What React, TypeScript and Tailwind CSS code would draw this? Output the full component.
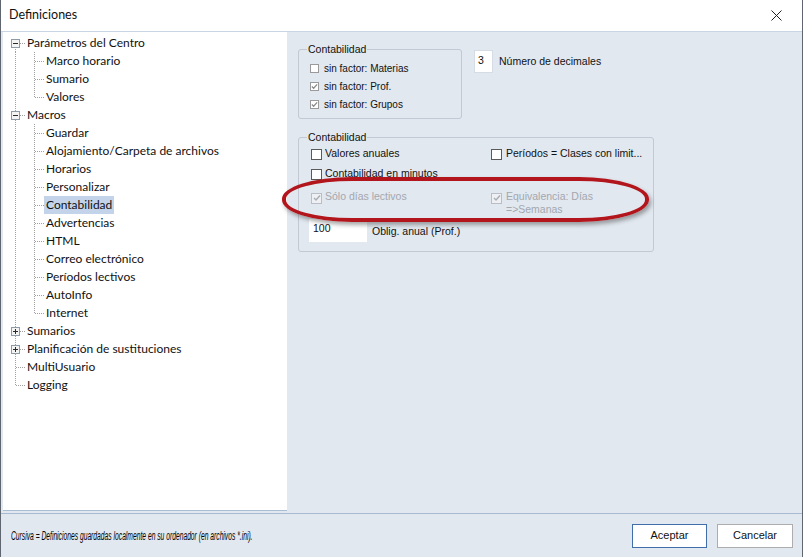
import React from "react";

type Section = {
  label: string;
  expander?: "plus" | "minus";
  children?: string[];
};

const sections: Section[] = [
  {
    label: "Parámetros del Centro",
    expander: "minus",
    children: ["Marco horario", "Sumario", "Valores"],
  },
  {
    label: "Macros",
    expander: "minus",
    children: [
      "Guardar",
      "Alojamiento/Carpeta de archivos",
      "Horarios",
      "Personalizar",
      "Contabilidad",
      "Advertencias",
      "HTML",
      "Correo electrónico",
      "Períodos lectivos",
      "AutoInfo",
      "Internet",
    ],
  },
  { label: "Sumarios", expander: "plus" },
  { label: "Planificación de sustituciones", expander: "plus" },
  { label: "MultiUsuario" },
  { label: "Logging" },
];

type Row = {
  label: string;
  level: 0 | 1;
  first?: boolean;
  last?: boolean;
  lastChild?: boolean;
  expander?: "plus" | "minus";
};

const rows: Row[] = [];
sections.forEach((s, i) => {
  rows.push({
    label: s.label,
    level: 0,
    first: i === 0,
    last: i === sections.length - 1,
    expander: s.expander,
  });
  (s.children || []).forEach((c, j, arr) => {
    rows.push({ label: c, level: 1, lastChild: j === arr.length - 1 });
  });
});

const dot = { stroke: "#a0a0a0", strokeDasharray: "1 1" };

const Guides = ({ row }: { row: Row }) => {
  const w = row.level ? 41 : 22;
  return (
    <svg width={w} height={18} className="shrink-0">
      {row.level === 0 ? (
        <>
          <line x1={12.5} x2={12.5} y1={row.first ? 9 : 0} y2={row.last ? 10 : 18} {...dot} />
          <line x1={13} x2={22} y1={9.5} y2={9.5} {...dot} />
        </>
      ) : (
        <>
          <line x1={12.5} x2={12.5} y1={0} y2={18} {...dot} />
          <line x1={31.5} x2={31.5} y1={0} y2={row.lastChild ? 10 : 18} {...dot} />
          <line x1={32} x2={41} y1={9.5} y2={9.5} {...dot} />
        </>
      )}
      {row.expander && (
        <g>
          <rect x={8.5} y={5.5} width={8} height={8} fill="#f4f4f4" stroke="#8f9aa8" />
          <line x1={10} x2={15} y1={9.5} y2={9.5} stroke="#2b2b2b" />
          {row.expander === "plus" && (
            <line x1={12.5} x2={12.5} y1={7} y2={12} stroke="#2b2b2b" />
          )}
        </g>
      )}
    </svg>
  );
};

const Check = ({
  checked,
  disabled,
  small,
}: {
  checked?: boolean;
  disabled?: boolean;
  small?: boolean;
}) => (
  <span
    className={
      "inline-flex shrink-0 items-center justify-center border " +
      (small ? "h-[9px] w-[9px] " : "h-[11px] w-[11px] ") +
      (disabled
        ? "border-[#b9bec6] bg-[#eef0f3]"
        : small
        ? "border-[#9a9a9a] bg-white"
        : "border-[#5a5a5a] bg-white")
    }
  >
    {checked && (
      <svg width={small ? 7 : 8} height={small ? 7 : 8} viewBox="0 0 8 8">
        <path
          d="M1 4 L3 6 L7 1.5"
          fill="none"
          stroke={disabled ? "#a9adb4" : "#8a8a8a"}
          strokeWidth={1.4}
        />
      </svg>
    )}
  </span>
);

export default function App() {
  return (
    <div className="h-[557px] w-[805px] bg-white">
      <div className="flex h-[557px] w-[803px] flex-col border-x border-[#5f6670] bg-[#e2e8f0] font-['Liberation_Sans',sans-serif] text-[#111]">
        {/* title bar */}
        <div className="flex h-[31px] shrink-0 items-center justify-between bg-white pl-[8px] pr-[20px] font-['Lato',sans-serif] text-[12.5px]">
          <span>Definiciones</span>
          <svg width="11" height="11" viewBox="0 0 11 11">
            <path d="M0.5 0.5 L10.5 10.5 M10.5 0.5 L0.5 10.5" stroke="#222" strokeWidth="1" />
          </svg>
        </div>

        <div className="flex min-h-0 flex-1 border-t border-[#c9d5e3]">
          {/* tree */}
          <div className="ml-[2px] mb-[2px] w-[284px] shrink-0 border-b border-[#a9bdd4] bg-white pt-[2px] font-['Lato',sans-serif] text-[12px]">
            {rows.map((r) => (
              <div key={r.label} className="flex h-[18px] items-center">
                <Guides row={r} />
                <span
                  className={
                    "h-[18px] px-[2px] leading-[18px] whitespace-nowrap " +
                    (r.label === "Contabilidad" ? "bg-[#c3d4ea]" : "")
                  }
                >
                  {r.label}
                </span>
              </div>
            ))}
          </div>

          {/* right panel */}
          <div className="relative flex-1 pl-[11px] pt-[11px] text-[10.5px]">
            <div className="flex items-start gap-[12px]">
              <fieldset className="w-[164px] rounded-[3px] border border-[#c3c9d2] px-0 pb-[4px]">
                <legend className="ml-[8px] px-[1px] leading-[13px]">Contabilidad</legend>
                <div className="mt-[3px] flex flex-col pl-[11px] text-[10px]">
                  <div className="flex h-[18px] items-center gap-[5px]">
                    <Check small />
                    <span>sin factor: Materias</span>
                  </div>
                  <div className="flex h-[18px] items-center gap-[5px]">
                    <Check small checked />
                    <span>sin factor: Prof.</span>
                  </div>
                  <div className="flex h-[19px] items-center gap-[5px]">
                    <Check small checked />
                    <span>sin factor: Grupos</span>
                  </div>
                </div>
              </fieldset>
              <div className="mt-[7px] flex items-center gap-[6px]">
                <div className="h-[23px] w-[19px] border border-[#d6dce5] bg-white pl-[3px] pt-[3px] leading-[13px]">
                  3
                </div>
                <span>Número de decimales</span>
              </div>
            </div>

            <fieldset className="mt-[12px] w-[356px] rounded-[3px] border border-[#c3c9d2] px-0 pb-[9px]">
              <legend className="ml-[8px] px-[1px] leading-[13px]">Contabilidad</legend>
              <div className="grid grid-cols-[180px_1fr] pl-[12px]">
                <div className="flex h-[20px] items-center gap-[3px]">
                  <Check />
                  <span>Valores anuales</span>
                </div>
                <div className="flex h-[20px] items-center gap-[4px]">
                  <Check />
                  <span>Períodos = Clases con limit...</span>
                </div>
                <div className="flex h-[20px] items-center gap-[3px]">
                  <Check />
                  <span>Contabilidad en minutos</span>
                </div>
                <div />
                <div className="mt-[6px] flex items-start gap-[3px] text-[#a3a7ae]">
                  <span className="mt-[1px]">
                    <Check checked disabled />
                  </span>
                  <span className="leading-[13px]">Sólo días lectivos</span>
                </div>
                <div className="mt-[6px] flex items-start gap-[4px] text-[#a3a7ae]">
                  <span className="mt-[1px]">
                    <Check checked disabled />
                  </span>
                  <span className="leading-[13px]">
                    Equivalencia: Días
                    <br />
                    =&gt;Semanas
                  </span>
                </div>
              </div>
              <div className="mt-[3px] flex items-center gap-[5px] pl-[10px]">
                <div className="h-[23px] w-[58px] bg-white pl-[4px] pt-[3px] leading-[13px]">100</div>
                <span className="mt-[3px]">Oblig. anual (Prof.)</span>
              </div>
            </fieldset>

            {/* hand-drawn highlight */}
            <div className="pointer-events-none absolute left-[-5px] top-[145px] h-[45px] w-[367px] rounded-[70px/22px] border-[4px] border-[#b2151b] shadow-[2px_3px_4px_rgba(60,60,60,0.45)]" />
          </div>
        </div>

        {/* footer */}
        <div className="flex h-[44px] shrink-0 items-center justify-between border-t border-[#a7bad2] pl-[10px] pr-[9px]">
          <span className="inline-block origin-left scale-x-[0.56] whitespace-nowrap text-[12px] italic text-black">
            Cursiva = Definiciones guardadas localmente en su ordenador (en archivos *.ini).
          </span>
          <div className="flex gap-[10px] text-[11px]">
            <button className="h-[24px] w-[75px] border border-[#3f6ea8] bg-white">Aceptar</button>
            <button className="h-[24px] w-[76px] border border-[#adadad] bg-white">Cancelar</button>
          </div>
        </div>
      </div>
    </div>
  );
}
